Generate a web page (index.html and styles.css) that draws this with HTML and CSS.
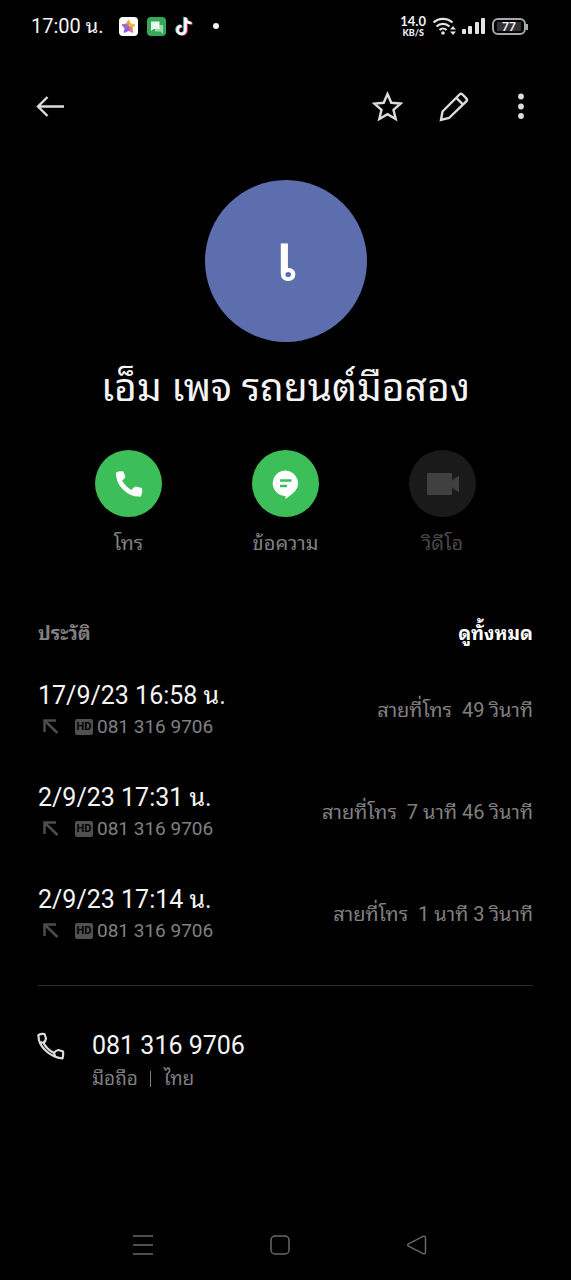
FILE: index.html
```html
<!DOCTYPE html>
<html lang="th">
<head>
<meta charset="utf-8">
<meta name="viewport" content="width=device-width, initial-scale=1">
<title>เอ็ม เพจ รถยนต์มือสอง</title>
<link rel="stylesheet" href="styles.css">
</head>
<body>
<svg class="defs" width="0" height="0" aria-hidden="true">
  <symbol id="outgoing" viewBox="0 0 18 18"><path d="M2.500 14V2.500H14M3 3l12.500 12" fill="none" stroke="currentColor" stroke-width="2.500"/></symbol>
</svg>

<header class="status">
  <span class="clock">17:00 น.</span>
  <div class="notices">
    <svg width="19" height="19" viewBox="0 0 19 19"><rect width="19" height="19" rx="4" fill="#fff"/><g stroke-linejoin="round" stroke-width="1.500"><path d="M9.500 3.500l2 4-2 2.500-2-2.500z" fill="#f6a13c" stroke="#f6a13c"/><path d="M15.500 8l-3 3.200-3-1.200 2-2.700z" fill="#f0b64a" stroke="#f0b64a"/><path d="M13.500 15l-4-2V10l3 1z" fill="#ef6f8a" stroke="#ef6f8a"/><path d="M5.500 15l4-2V10l-3 1z" fill="#7b62e8" stroke="#7b62e8"/><path d="M3.500 8l3 3.200 3-1.200-2-2.700z" fill="#a566c8" stroke="#a566c8"/></g></svg>
    <svg width="19" height="19" viewBox="0 0 19 19"><rect width="19" height="19" rx="4" fill="#35a85a"/><path d="M8 8h8v9l-2.500-2.500H8z" fill="#9ad9ac"/><path d="M4 4.500h8.500V12H6.500L4 14z" fill="#e8f8ec"/></svg>
    <svg width="19" height="20" viewBox="0 0 19 20" fill="none" stroke-width="2.500"><path d="M9.500 1v12.500a4 4 0 1 1-4-4M9.500 2c.5 3 3 4.500 6 4.500" stroke="#4de0dc"/><path d="M11.500 2v12.500a4 4 0 1 1-4-4M11.500 3c.5 3 3 4.500 6 4.500" stroke="#ee3f61"/><path d="M10.500 1.500V14a4 4 0 1 1-4-4M10.500 2.500c.5 3 3 4.500 6 4.500" stroke="#fff"/></svg>
    <span class="more-dot"></span>
  </div>
  <div class="signals">
    <span class="rate"><b>14.0</b><small>KB/S</small></span>
    <svg width="24" height="20" viewBox="0 0 24 20" fill="none" stroke="#e4e4e4" stroke-width="2.300"><path d="M1.500 6.500a14 14 0 0 1 19 0M4.500 10.500a9.500 9.500 0 0 1 13 0M7.500 14a5 5 0 0 1 7 0"/><circle cx="11" cy="17" r="1.800" fill="#e4e4e4" stroke="none"/><path d="M18 13.500l3-3.500 3 3.500zM18 15.500l3 3.500 3-3.500z" fill="#e4e4e4" stroke="none"/></svg>
    <svg width="24" height="18" viewBox="0 0 24 18" fill="#e4e4e4"><rect x="0" y="12" width="4" height="5" rx="1"/><rect x="6" y="9" width="4" height="8" rx="1"/><rect x="13" y="5" width="4" height="12" rx="1"/><rect x="19" y="1" width="4" height="16" rx="1"/></svg>
    <span class="battery"><span>77</span></span>
  </div>
</header>

<nav class="toolbar">
  <button class="tool back" aria-label="ย้อนกลับ"><svg width="32" height="32" viewBox="0 0 32 32"><path d="M30 16.500H4M13.500 7l-9.500 9.500 9.500 9.500"/></svg></button>
  <button class="tool" aria-label="รายการโปรด"><svg width="32" height="32" viewBox="0 0 32 32"><path d="M16.500 4l3.800 8.800 9.200.8-7 6.200 2.200 9.200-8.200-4.900L8.300 29l2.200-9.200-7-6.200 9.200-.8z"/></svg></button>
  <button class="tool" aria-label="แก้ไข"><svg width="32" height="32" viewBox="0 0 32 32"><path d="M3 30l1.500-8.500L21.500 4.500q1.500-1.500 3 0l3.800 3.800q1.500 1.500 0 3L11 28zM18.500 8l6.300 6.300"/></svg></button>
  <button class="tool" aria-label="เพิ่มเติม"><svg width="32" height="32" viewBox="0 0 32 32"><g class="solid"><circle cx="16" cy="6.500" r="2.900"/><circle cx="16" cy="16.500" r="2.900"/><circle cx="16" cy="26" r="2.900"/></g></svg></button>
</nav>

<main>
  <div class="avatar">เ</div>
  <h1>เอ็ม เพจ รถยนต์มือสอง</h1>

  <div class="actions">
    <button class="action"><span class="disc"><svg width="28" height="28" viewBox="0 0 28 28"><path d="M1 2.500Q4.500.5 8.500 1.500l1.800 5.500q-1.300 3-3.300 3.500 3.500 6 9.500 9.500 1-2.500 4-3.500l6.500 1.500q1 4-1 8.500Q16 27.500 8 19.500.5 12 1 2.500z" fill="#fff"/></svg></span>โทร</button>
    <button class="action"><span class="disc"><svg width="28" height="30" viewBox="0 0 28 30"><path d="M13.500 1.500a12.700 12.700 0 0 1 6.500 23.500L13.500 30v-3a12.700 12.700 0 0 1 0-25.500z" fill="#fff"/><path d="M8 11.500h11.500M8 17h7" stroke="#3cbf58" stroke-width="2.500"/></svg></span>ข้อความ</button>
    <button class="action" disabled><span class="disc"><svg width="34" height="24" viewBox="0 0 34 24" fill="#404040"><path d="M2.500 1H25q1 0 1 1v6.500l7-5v17l-7-5V22q0 1-1 1H2.500q-1.500 0-1.500-1V2q0-1 1.500-1z"/></svg></span>วิดีโอ</button>
  </div>

  <section class="history">
    <div class="history-head"><h2>ประวัติ</h2><a href="#all">ดูทั้งหมด</a></div>
    <ul>
      <li>
        <div><p class="primary">17/9/23 16:58 น.</p><p class="secondary"><svg class="direction"><use href="#outgoing"/></svg><span class="hd">HD</span>081 316 9706</p></div>
        <span class="duration">สายที่โทร&nbsp; 49 วินาที</span>
      </li>
      <li>
        <div><p class="primary">2/9/23 17:31 น.</p><p class="secondary"><svg class="direction"><use href="#outgoing"/></svg><span class="hd">HD</span>081 316 9706</p></div>
        <span class="duration">สายที่โทร&nbsp; 7 นาที 46 วินาที</span>
      </li>
      <li>
        <div><p class="primary">2/9/23 17:14 น.</p><p class="secondary"><svg class="direction"><use href="#outgoing"/></svg><span class="hd">HD</span>081 316 9706</p></div>
        <span class="duration">สายที่โทร&nbsp; 1 นาที 3 วินาที</span>
      </li>
    </ul>
  </section>

  <section class="phone">
    <svg width="28" height="28" viewBox="0 0 28 28" fill="none" stroke="#dcdcdc" stroke-width="2.200" stroke-linejoin="round"><path d="M1.500 3Q4 1.500 7.500 2L9 6.500Q8.500 9.500 6.500 11q3.500 6.500 10.500 10 1.500-2.500 4.500-3l4.500 1.500q.5 3.500-.5 7Q16 25.500 8.500 18.500 1 11.500 1.500 3zM2.500 10q3 .5 4 1M17 21l1.500 4.500"/></svg>
    <div><p class="primary">081 316 9706</p><p class="secondary">มือถือ<span class="bar"></span>ไทย</p></div>
  </section>
</main>

<footer class="system-nav">
  <button aria-label="ล่าสุด"><svg width="22" height="22" viewBox="0 0 22 22"><path d="M1 2h20M1 11h20M1 20h20"/></svg></button>
  <button aria-label="หน้าหลัก"><svg width="22" height="22" viewBox="0 0 22 22"><rect x="2" y="2" width="18" height="18" rx="4"/></svg></button>
  <button aria-label="กลับ"><svg width="22" height="22" viewBox="0 0 22 22"><path d="M2.500 9.800L17 2.400q2.500-.9 2.500 1.600v14q0 2.500-2.500 1.600L2.500 12.200q-1.500-1.200 0-2.400z"/></svg></button>
</footer>
</body>
</html>
```
FILE: styles.css
```css
* { box-sizing: border-box; }

:root {
  --thai: "Noto Sans Thai Looped", "Noto Looped Thai", "Droid Sans Thai", Loma, Garuda, Waree, Umpush, Norasi, "Tlwg Typo", Sarabun, "Noto Sans Thai", "Noto Sans";
}

body {
  display: flex;
  flex-direction: column;
  min-height: 100vh;
  margin: 0;
  background: #000;
  color: #f4f4f4;
  font-family: Roboto, var(--thai), sans-serif;
}

h1, h2, p, ul { margin: 0; padding: 0; }
ul { list-style: none; }
svg { flex: none; }

button {
  padding: 0;
  border: 0;
  background: none;
  color: inherit;
  font: inherit;
}

.defs { position: absolute; }

.status {
  display: flex;
  align-items: center;
  height: 52px;
  padding: 0 45px 0 31px;
}

.clock { font: 20px/28px Roboto, var(--thai), sans-serif; }

.notices {
  display: flex;
  align-items: center;
  gap: 9px;
  margin-left: 15px;
}

.more-dot {
  width: 6px;
  height: 6px;
  margin-left: 10px;
  border-radius: 50%;
  background: #f4f4f4;
}

.signals {
  display: flex;
  align-items: center;
  gap: 6px;
  margin-left: auto;
}

.rate {
  display: flex;
  flex-direction: column;
  align-items: center;
  font-family: Lato, sans-serif;
}
.rate b { font-size: 13px; line-height: 12px; }
.rate small { font-size: 9px; line-height: 11px; font-weight: 900; }

.battery {
  position: relative;
  display: flex;
  width: 34px;
  height: 17px;
  padding: 2px 3px;
  border: 2px solid #a8a8a8;
  border-radius: 6px;
}
.battery span {
  flex: 1;
  background: #333;
  font: 600 12px/9px Inter, sans-serif;
  text-align: center;
}
.battery::after {
  content: "";
  position: absolute;
  top: 4px;
  right: -4px;
  width: 2px;
  height: 6px;
  background: #a8a8a8;
}

.toolbar {
  display: flex;
  align-items: center;
  gap: 35px;
  height: 108px;
  padding: 0 34px;
}
.tool { display: flex; }
.back { margin-right: auto; }
.tool svg {
  fill: none;
  stroke: #dcdcdc;
  stroke-width: 2.4;
}
.tool .solid { fill: #dcdcdc; stroke: none; }

.avatar {
  display: flex;
  align-items: center;
  justify-content: center;
  width: 162px;
  height: 162px;
  margin: 20px auto 16px;
  padding-bottom: 6px;
  border-radius: 50%;
  background: #5c6eae;
  color: #fff;
  font-size: 66px;
  font-weight: 500;
  line-height: 80px;
}

h1 {
  font-size: 39px;
  font-weight: 400;
  line-height: 60px;
  text-align: center;
}

.actions {
  display: grid;
  grid-template-columns: repeat(3, 1fr);
  margin-top: 32px;
  padding: 0 50px;
}
.action {
  display: flex;
  flex-direction: column;
  align-items: center;
  gap: 12px;
  color: #808080;
  font-size: 20px;
  line-height: 28px;
}
.action:disabled { color: #484848; }
.disc {
  display: flex;
  align-items: center;
  justify-content: center;
  width: 67px;
  height: 67px;
  border-radius: 50%;
  background: #3cbf58;
}
.action:disabled .disc { background: #1a1a1a; }

.history {
  margin: 62px 38px 0;
  padding-bottom: 39px;
  border-bottom: 1px solid #2c2c2c;
}
.history-head {
  display: flex;
  justify-content: space-between;
  font-size: 19px;
  font-weight: 700;
  line-height: 30px;
}
.history-head h2 { color: #808080; font: inherit; }
.history-head a { color: #fff; text-decoration: none; }
.history ul {
  display: grid;
  gap: 40px;
  margin-top: 31px;
}
.history li {
  display: flex;
  align-items: center;
  justify-content: space-between;
}

.primary {
  font-size: 25px;
  line-height: 32px;
}
.secondary {
  display: flex;
  align-items: center;
  color: #808080;
  font-size: 19px;
  line-height: 30px;
}
.direction {
  width: 18px;
  height: 18px;
  margin: 0 15px 0 4px;
  color: #4c4c4c;
}
.hd {
  width: 18px;
  margin-right: 4px;
  border-radius: 2px;
  background: #505050;
  color: #000;
  font-size: 11px;
  font-weight: 700;
  line-height: 16px;
  text-align: center;
}
.duration {
  padding-bottom: 2px;
  color: #808080;
  font-size: 20px;
  line-height: 28px;
}

.phone {
  display: flex;
  gap: 27px;
  padding: 44px 37px;
}
.phone > svg { margin-top: 2px; }
.phone .secondary { line-height: 34px; }
.bar {
  width: 1px;
  height: 16px;
  margin: 0 13px 0 12px;
  background: #808080;
}

.system-nav {
  display: flex;
  justify-content: center;
  gap: 115px;
  margin-top: auto;
  padding: 0 12px 24px 0;
}
.system-nav button { display: flex; }
.system-nav svg {
  fill: none;
  stroke: #686868;
  stroke-width: 1.5;
}
```
